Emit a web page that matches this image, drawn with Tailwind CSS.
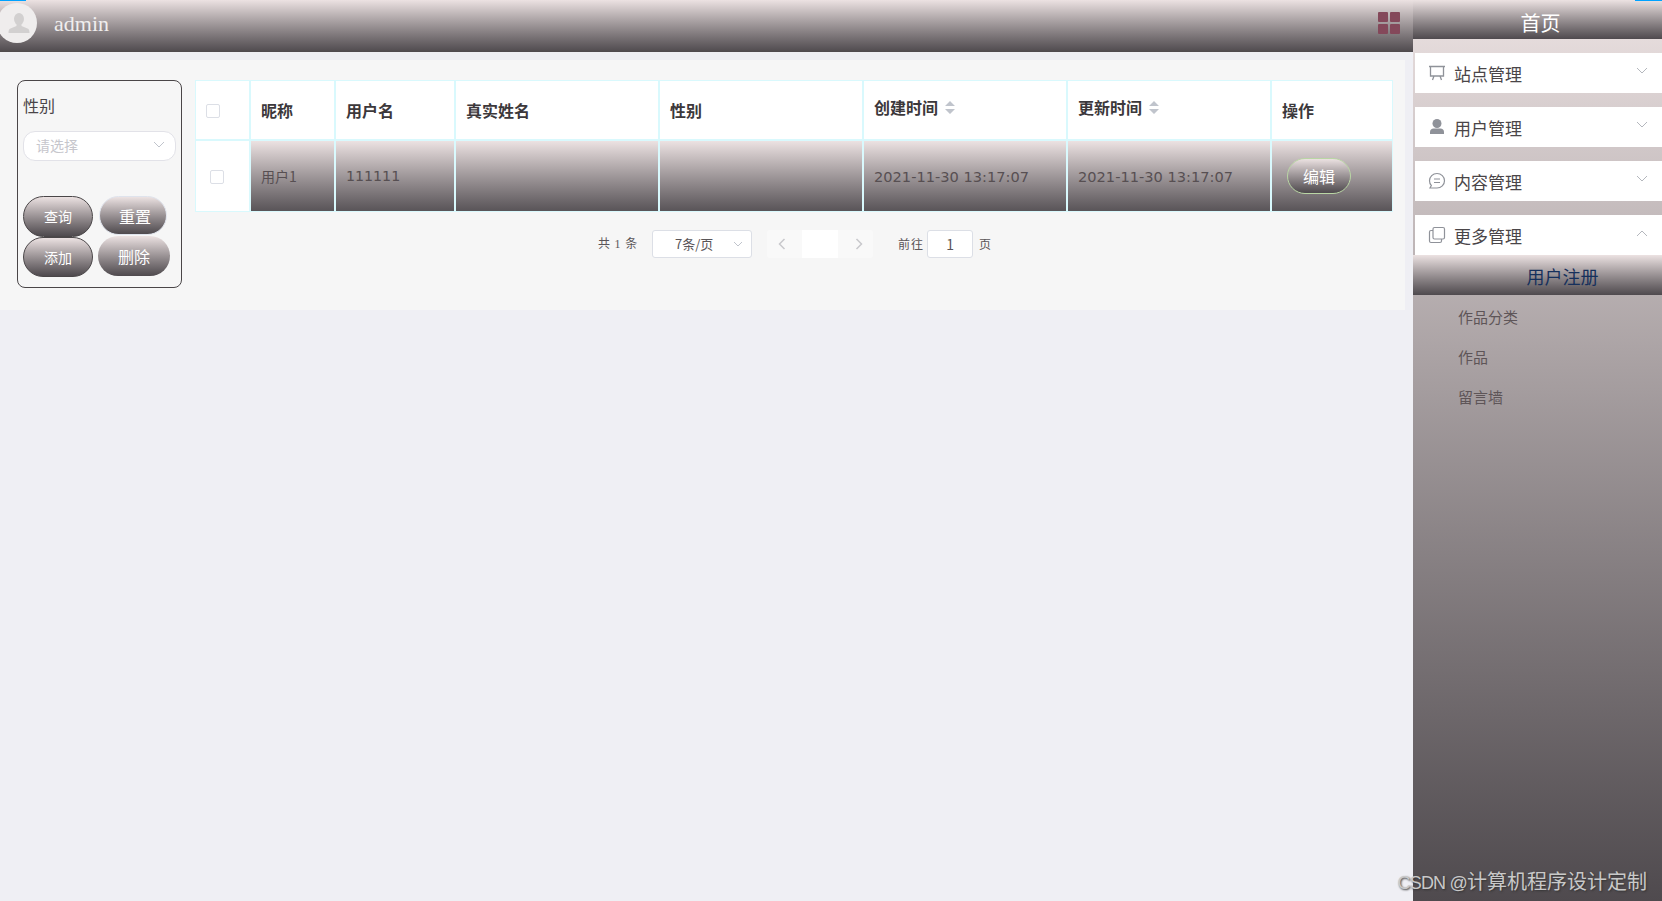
<!DOCTYPE html>
<html lang="zh-CN">
<head>
<meta charset="UTF-8">
<title>admin</title>
<script src="https://cdn.jsdelivr.net/npm/@tailwindcss/browser@4"></script>
</head>
<body class="relative flex h-[901px] w-[1662px] overflow-hidden bg-[#efeff4] font-['Noto_Sans_CJK_SC',sans-serif] text-[#4a4548]">

<!-- top blue progress slivers -->
<div class="absolute left-0 top-0 h-px w-[26px] bg-[#00a2ff]"></div>
<div class="absolute right-0 top-0 h-px w-[27px] bg-[#00a2ff]"></div>

<div class="flex w-[1413px] flex-col">
  <header class="flex h-[52px] items-center justify-between bg-linear-to-b from-[#ece2e2] to-[#4f4a4e] pr-[13px]">
    <div class="flex items-center">
      <div class="ml-[-3px] mt-[-6px] flex h-10 w-10 items-center justify-center rounded-full bg-[#efeded] pl-[4px]">
        <svg width="22" height="20" viewBox="0 0 22 20" fill="#d2d0d0"><ellipse cx="11" cy="6" rx="5" ry="6"/><path d="M8.500 11h5v2l6 2.500c1.500.6 2 2 2 4.500H.5c0-2.500.5-3.900 2-4.500l6-2.500z"/></svg>
      </div>
      <span class="ml-[17px] mt-[-6px] font-['Liberation_Serif',serif] text-[22px] text-[#f0eeee]">admin</span>
    </div>
    <div class="mt-[-6px] grid grid-cols-2 gap-[2px]">
      <i class="h-[10px] w-[10px] rounded-[1px] bg-[#84485a]"></i>
      <i class="h-[10px] w-[10px] rounded-[1px] bg-[#84485a]"></i>
      <i class="h-[10px] w-[10px] rounded-[1px] bg-[#84485a]"></i>
      <i class="h-[10px] w-[10px] rounded-[1px] bg-[#84485a]"></i>
    </div>
  </header>

  <main class="mt-2 flex h-[250px] w-[1405px] items-start gap-[13px] bg-[#f6f6f6] pl-[17px] pt-5">
    <!-- filter box -->
    <div class="h-[208px] w-[165px] rounded-lg border border-[#4a4648] pl-[5px] pt-[13px]">
      <div class="text-[16px] leading-[22px]">性别</div>
      <div class="mt-[15px] flex h-[30px] w-[153px] items-center justify-between rounded-xl border border-[#e2e2e8] bg-white pb-[2px] pl-3 pr-[10px] text-[14px] text-[#c6c6cc]">
        <span>请选择</span>
        <svg width="12" height="8" viewBox="0 0 12 8" fill="none" stroke="#c0c4cc"><path d="M1 1l5 5 5-5"/></svg>
      </div>
      <div class="mt-[35px] flex items-start gap-[6px]">
        <button class="h-[41px] w-[70px] rounded-[21px] border border-[#4a4648] bg-linear-to-b from-[#ece2e2] to-[#4f4a4e] text-[14px] text-white">查询</button>
        <button class="h-[39px] w-[68px] rounded-[20px] border border-[#dfe3ec] bg-linear-to-b from-[#ece2e2] to-[#4f4a4e] pl-[4px] text-[16px] text-white">重置</button>
      </div>
      <div class="flex items-start gap-[5px]">
        <button class="h-[40px] w-[70px] rounded-[20px] border border-[#4a4648] bg-linear-to-b from-[#ece2e2] to-[#4f4a4e] text-[14px] text-white">添加</button>
        <button class="mt-[-1px] h-[40px] w-[72px] rounded-[20px] bg-linear-to-b from-[#ece2e2] to-[#4f4a4e] text-[16px] text-white">删除</button>
      </div>
    </div>

    <!-- table + pager -->
    <div class="w-[1198px]">
      <table class="w-full table-fixed border-separate border-spacing-0 border border-[#d9f9fd] bg-white">
        <colgroup>
          <col class="w-[55px]"><col class="w-[85px]"><col class="w-[120px]"><col class="w-[204px]"><col class="w-[204px]"><col class="w-[204px]"><col class="w-[204px]"><col>
        </colgroup>
        <thead>
          <tr class="h-[60px] text-left text-[16px] font-bold text-[#3c383b]">
            <th class="border-b-2 border-r-2 border-[#d9f9fd] pl-[10px]"><div class="mt-[2px] h-[14px] w-[14px] rounded-[2px] border border-[#dcdfe6] bg-white"></div></th>
            <th class="border-b-2 border-r-2 border-[#d9f9fd] pl-[10px]">昵称</th>
            <th class="border-b-2 border-r-2 border-[#d9f9fd] pl-[10px]">用户名</th>
            <th class="border-b-2 border-r-2 border-[#d9f9fd] pl-[10px]">真实姓名</th>
            <th class="border-b-2 border-r-2 border-[#d9f9fd] pl-[10px]">性别</th>
            <th class="border-b-2 border-r-2 border-[#d9f9fd] pl-[10px]">
              <div class="mt-[-6px] flex items-center gap-[7px]">创建时间
                <svg width="10" height="13" viewBox="0 0 10 13" fill="#c0c4cc"><path d="M5 0l5 5H0zM5 13L0 8h10z"/></svg>
              </div>
            </th>
            <th class="border-b-2 border-r-2 border-[#d9f9fd] pl-[10px]">
              <div class="mt-[-6px] flex items-center gap-[7px]">更新时间
                <svg width="10" height="13" viewBox="0 0 10 13" fill="#c0c4cc"><path d="M5 0l5 5H0zM5 13L0 8h10z"/></svg>
              </div>
            </th>
            <th class="border-b-2 border-[#d9f9fd] pl-[10px]">操作</th>
          </tr>
        </thead>
        <tbody>
          <tr class="h-[70px] text-left text-[14px] text-[#574f52]">
            <td class="border-r-2 border-[#d9f9fd] pl-[14px]"><div class="mt-[2px] h-[14px] w-[14px] rounded-[2px] border border-[#dcdfe6] bg-white"></div></td>
            <td class="border-r-2 border-[#d9f9fd] bg-linear-to-b from-[#ece2e2] to-[#595458] pl-[10px]">用户1</td>
            <td class="border-r-2 border-[#d9f9fd] bg-linear-to-b from-[#ece2e2] to-[#595458] pl-[10px] pt-[2px] font-['DejaVu_Sans',sans-serif] text-[14.200px]">111111</td>
            <td class="border-r-2 border-[#d9f9fd] bg-linear-to-b from-[#ece2e2] to-[#595458]"></td>
            <td class="border-r-2 border-[#d9f9fd] bg-linear-to-b from-[#ece2e2] to-[#595458]"></td>
            <td class="border-r-2 border-[#d9f9fd] bg-linear-to-b from-[#ece2e2] to-[#595458] pl-[10px] pt-[2px] font-['DejaVu_Sans',sans-serif] text-[14.600px]">2021-11-30 13:17:07</td>
            <td class="border-r-2 border-[#d9f9fd] bg-linear-to-b from-[#ece2e2] to-[#595458] pl-[10px] pt-[2px] font-['DejaVu_Sans',sans-serif] text-[14.600px]">2021-11-30 13:17:07</td>
            <td class="bg-linear-to-b from-[#ece2e2] to-[#595458] pl-[15px]">
              <button class="block h-9 w-16 rounded-[18px] border border-[#b9d6a4] bg-linear-to-b from-[#ece2e2] to-[#4f4a4e] text-[16px] text-white">编辑</button>
            </td>
          </tr>
        </tbody>
      </table>

      <div class="mt-[17px] flex h-[30px] items-center text-[12px] text-[#5a5558]">
        <span class="ml-[403px] w-[39px] whitespace-nowrap font-['Liberation_Serif','Noto_Sans_CJK_SC',serif] tracking-[0.800px]">共 1 条</span>
        <div class="ml-[15px] flex h-7 w-[100px] items-center justify-between rounded-[3px] border border-[#dcdfe6] bg-white pl-[22px] pr-[8px] text-[13px]">
          <span>7条/页</span>
          <svg width="10" height="6" viewBox="0 0 10 6" fill="none" stroke="#c0c4cc"><path d="M1 1l4 4 4-4"/></svg>
        </div>
        <div class="ml-[15px] flex h-7 items-stretch">
          <div class="flex w-[35px] items-center justify-center rounded-l-[3px] bg-[#f9f9f9] pr-[6px]"><svg width="8" height="12" viewBox="0 0 8 12" fill="none" stroke="#c8c8cc" stroke-width="1.500"><path d="M6.500 1l-5 5 5 5"/></svg></div>
          <div class="w-9 bg-white"></div>
          <div class="flex w-[35px] items-center justify-center rounded-r-[3px] bg-[#f9f9f9] pl-[6px]"><svg width="8" height="12" viewBox="0 0 8 12" fill="none" stroke="#c8c8cc" stroke-width="1.500"><path d="M1.500 1l5 5-5 5"/></svg></div>
        </div>
        <span class="ml-[25px] tracking-[1px]">前往</span>
        <div class="ml-[3px] flex h-7 w-[46px] items-center justify-center rounded-[3px] border border-[#dcdfe6] bg-white text-[14px]">1</div>
        <span class="ml-[6px]">页</span>
      </div>
    </div>
  </main>
</div>

<!-- right menu -->
<aside class="w-[249px] bg-linear-to-b from-[#ece2e2] to-[#4f4a4e]">
  <div class="flex h-[39px] items-center justify-center bg-linear-to-b from-[#ece2e2] to-[#4f4a4e] pl-[6px] pt-[6px] text-[20px] text-white">首页</div>
  <ul class="pl-[2px] pt-[14px] text-[17px] text-[#4a4548]">
    <li class="flex h-10 items-center justify-between bg-white pl-[13px] pr-[14px]">
      <div class="flex items-center gap-[8px]">
        <svg width="18" height="18" viewBox="0 0 18 18" fill="none" stroke="#8f9299" stroke-width="1.300"><path d="M1 2.500h16M2.500 2.500v9.500h13V2.500M6 12l-1.500 4M12 12l1.500 4"/></svg>
        <span class="pt-[2px]">站点管理</span>
      </div>
      <svg class="mt-[-4px]" width="12" height="8" viewBox="0 0 12 8" fill="none" stroke="#b4b7bd"><path d="M1 1l5 5 5-5"/></svg>
    </li>
    <li class="mt-[14px] flex h-10 items-center justify-between bg-white pl-[13px] pr-[14px]">
      <div class="flex items-center gap-[8px]">
        <svg width="18" height="18" viewBox="0 0 18 18" fill="#8f9299"><circle cx="9" cy="5.500" r="4.500"/><path d="M2 16v-2c0-2 1.500-3.500 3.500-3.500h7c2 0 3.500 1.500 3.500 3.500v2z"/></svg>
        <span class="pt-[2px]">用户管理</span>
      </div>
      <svg class="mt-[-4px]" width="12" height="8" viewBox="0 0 12 8" fill="none" stroke="#b4b7bd"><path d="M1 1l5 5 5-5"/></svg>
    </li>
    <li class="mt-[14px] flex h-10 items-center justify-between bg-white pl-[13px] pr-[14px]">
      <div class="flex items-center gap-[8px]">
        <svg width="18" height="18" viewBox="0 0 18 18" fill="none" stroke="#8f9299" stroke-width="1.200"><path d="M9 1.500c4.200 0 7.500 3.200 7.500 7.200S13.200 16 9 16H2l1.300-2.500C2.200 12.300 1.500 10.600 1.500 8.700 1.500 4.700 4.800 1.500 9 1.500z"/><path d="M6 7h6M6 10.500h6"/></svg>
        <span class="pt-[2px]">内容管理</span>
      </div>
      <svg class="mt-[-4px]" width="12" height="8" viewBox="0 0 12 8" fill="none" stroke="#b4b7bd"><path d="M1 1l5 5 5-5"/></svg>
    </li>
    <li class="mt-[14px] flex h-10 items-center justify-between bg-white pl-[13px] pr-[14px]">
      <div class="flex items-center gap-[8px]">
        <svg width="18" height="18" viewBox="0 0 18 18" fill="none" stroke="#8f9299" stroke-width="1.200"><rect x="5" y="1.500" width="11.500" height="11.500" rx="1.500"/><path d="M5 4.500H3A1.500 1.500 0 0 0 1.500 6v9A1.500 1.500 0 0 0 3 16.500h9A1.500 1.500 0 0 0 13.500 15v-2"/></svg>
        <span class="pt-[2px]">更多管理</span>
      </div>
      <svg class="mt-[-4px]" width="12" height="8" viewBox="0 0 12 8" fill="none" stroke="#b4b7bd"><path d="M1 7l5-5 5 5"/></svg>
    </li>
  </ul>
  <div class="flex h-10 items-center justify-center bg-linear-to-b from-[#ece2e2] to-[#4f4a4e] pl-[50px] pt-[3px] text-[18px] text-[#16305c]">用户注册</div>
  <ul class="pl-[45px] pt-[2px] text-[15px] text-[#5e5558]">
    <li class="flex h-10 items-center">作品分类</li>
    <li class="flex h-10 items-center">作品</li>
    <li class="flex h-10 items-center">留言墙</li>
  </ul>
</aside>

<!-- watermark -->
<div class="absolute bottom-[4px] right-[15px] font-['Liberation_Sans','Noto_Sans_CJK_SC',sans-serif] text-[20px] text-[#c9c9c9] [text-shadow:1px_1px_2px_#333]"><span class="text-[18px] tracking-[-0.800px]">CSDN @</span>计算机程序设计定制</div>
</body>
</html>
